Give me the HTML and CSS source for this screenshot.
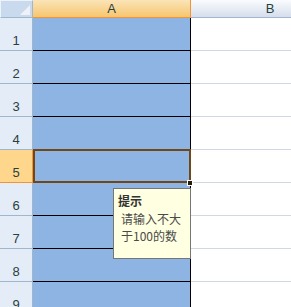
FILE: index.html
```html
<!DOCTYPE html>
<html lang="zh-CN">
<head>
    <meta charset="UTF-8">
    <title>数据有效性提示</title>
    <link rel="stylesheet" href="styles.css">
</head>
<body>
    <div class="sheet">
        <div class="row head">
            <div class="corner"><span class="tri"></span></div>
            <div class="col-h col-a">A</div>
            <div class="col-h col-b">B</div>
        </div>
        <div class="row"><div class="rh">1</div><div class="ca"></div><div class="cb"></div></div>
        <div class="row"><div class="rh">2</div><div class="ca"></div><div class="cb"></div></div>
        <div class="row"><div class="rh">3</div><div class="ca"></div><div class="cb"></div></div>
        <div class="row"><div class="rh">4</div><div class="ca"></div><div class="cb"></div></div>
        <div class="row"><div class="rh rh-sel">5</div><div class="ca ca-sel"><span class="handle"></span></div><div class="cb"></div></div>
        <div class="row"><div class="rh">6</div><div class="ca"></div><div class="cb"></div></div>
        <div class="row"><div class="rh">7</div><div class="ca"></div><div class="cb"></div></div>
        <div class="row"><div class="rh">8</div><div class="ca"></div><div class="cb"></div></div>
        <div class="row"><div class="rh">9</div><div class="ca"></div><div class="cb"></div></div>

        <!-- 输入信息提示框 -->
        <div class="tip">
            <div class="tip-title">提示</div>
            <div class="tip-body">请输入不大<br>于100的数</div>
        </div>
    </div>
</body>
</html>
```

FILE: styles.css
```css
body {
    margin: 0;
    overflow: hidden;
    background: #fff;
    font-family: "Liberation Sans", Arial, sans-serif;
}
.sheet {
    position: relative;
    width: 291px;
    height: 307px;
    overflow: hidden;
}
.row {
    display: flex;
    height: 33px;
}
.row > div { box-sizing: border-box; flex-shrink: 0; }
.head { height: 18px; }

.corner {
    position: relative;
    width: 33px;
    background: #c9d9ee;
    border: 1px solid #eef3fa;
    border-right: 1px solid #9eb6ce;
    border-bottom: 1px solid #9eb6ce;
}
.tri {
    position: absolute;
    right: 2px;
    bottom: 2px;
    width: 0;
    height: 0;
    border-left: 10px solid transparent;
    border-bottom: 10px solid #eef2f7;
}
.col-h {
    font-size: 13px;
    color: #27413e;
    text-align: center;
    line-height: 17px;
}
.col-a {
    width: 158px;
    background: linear-gradient(#fbe4b8, #f6c66f);
    border-right: 1px solid #f29436;
    border-bottom: 1px solid #f29436;
}
.col-b {
    flex: 1;
    min-width: 158px;
    background: linear-gradient(#fafcfe, #d5deeb);
    border-bottom: 1px solid #9eb6ce;
}

.rh {
    width: 33px;
    background: #e4ecf7;
    border-right: 1px solid #9eb6ce;
    border-bottom: 1px solid #9eb6ce;
    display: flex;
    align-items: flex-end;
    justify-content: center;
    padding-bottom: 2px;
    font-size: 13px;
    color: #27413e;
}
.rh-sel {
    background: #fed68c;
    border-right-color: #f29436;
    border-bottom-color: #f29436;
}
.ca {
    position: relative;
    width: 158px;
    background: #8db4e2;
    border-right: 1px solid #000;
    border-bottom: 1px solid #000;
}
.cb {
    flex: 1;
    border-bottom: 1px solid #d0d7e5;
}

/* 选中单元格 */
.ca-sel::after {
    content: "";
    position: absolute;
    left: 0;
    top: -1px;
    right: -1px;
    bottom: -1px;
    border: 2px solid #6f4718;
}
.handle {
    position: absolute;
    right: -3px;
    bottom: -4px;
    width: 4px;
    height: 4px;
    background: #2b1a08;
    border: 1px solid #fff;
    z-index: 2;
}

.tip {
    position: absolute;
    left: 113px;
    top: 188px;
    width: 78px;
    height: 71px;
    box-sizing: border-box;
    background: #ffffe1;
    border: 1px solid #767676;
    padding: 2px 0 0 4px;
    font-family: "Noto Sans CJK SC", sans-serif;
    font-size: 12px;
    z-index: 3;
}
.tip-title {
    font-weight: bold;
    color: #333;
    line-height: 19px;
}
.tip-body {
    color: #4a4a4a;
    padding-left: 3px;
    line-height: 17px;
}
```
